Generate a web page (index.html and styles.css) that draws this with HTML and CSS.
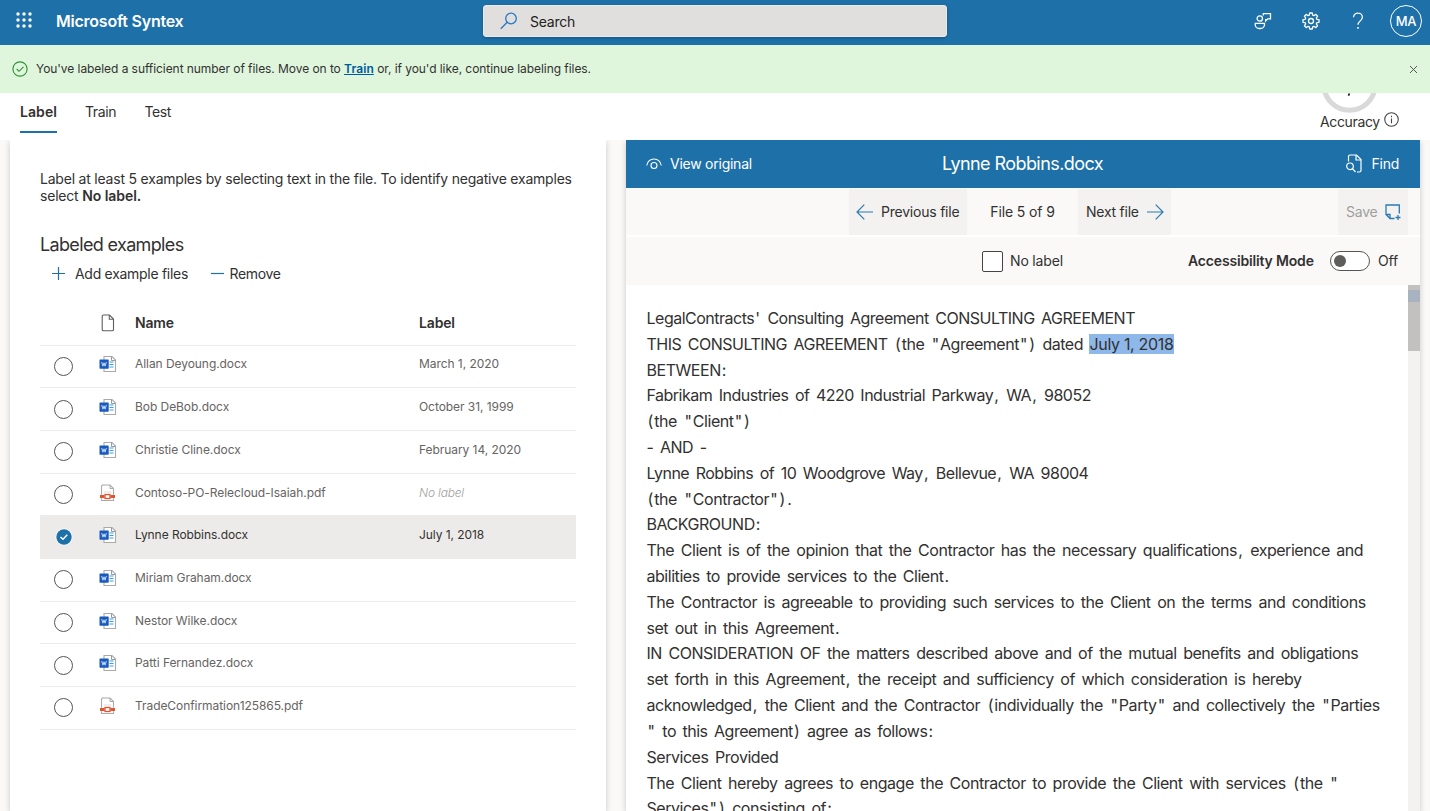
FILE: index.html
```
<!DOCTYPE html>
<html lang="en">
<head>
<meta charset="utf-8">
<title>Microsoft Syntex</title>
<link rel="stylesheet" href="styles.css">
</head>
<body>
<svg class="defs" aria-hidden="true">
  <symbol id="word" viewBox="0 0 18 18">
    <path d="M5 1.500h8l3.500 3.500v11.500h-11.500z" fill="#fff" stroke="#aaa" stroke-width="1.100"/>
    <path d="M12.500 1.500v4h4" fill="none" stroke="#999" stroke-width="1"/>
    <path d="M10.500 7h4M10.500 9.500h4M10.500 12h4" stroke="#3a9be8" stroke-width="1.200"/>
    <rect x="0.500" y="4.500" width="9.200" height="9.200" rx=".6" fill="#185abd"/>
    <path d="M2.700 7l1.200 4.200L5 7.800l1.100 3.400L7.300 7" fill="none" stroke="#c8dcf6" stroke-width="1"/>
  </symbol>
  <symbol id="pdf" viewBox="0 0 18 18">
    <path d="M3.500 1h7.500l3.500 3.500V16.500h-12V2z" fill="#fff" stroke="#aaa" stroke-width="1.100"/>
    <path d="M11 1v3.500h3.500" fill="none" stroke="#aaa"/>
    <path d="M4.500 8h8" stroke="#ddd"/>
    <path d="M1.500 12.500h14" stroke="#fff" stroke-width="3.500"/>
    <path d="M1 12.500h4.500M11.500 12.500h4.500" stroke="#e2532f" stroke-width="3"/>
    <rect x="6" y="10.500" width="5" height="4" fill="#fff" stroke="#e2532f" stroke-width="1.300"/>
  </symbol>
</svg>
<header class="top">
  <svg class="waffle" viewBox="0 0 16 16" fill="#fff"><circle cx="2" cy="2" r="1.700"/><circle cx="8" cy="2" r="1.700"/><circle cx="14" cy="2" r="1.700"/><circle cx="2" cy="8" r="1.700"/><circle cx="8" cy="8" r="1.700"/><circle cx="14" cy="8" r="1.700"/><circle cx="2" cy="14" r="1.700"/><circle cx="8" cy="14" r="1.700"/><circle cx="14" cy="14" r="1.700"/></svg>
  <span class="brand">Microsoft Syntex</span>
  <div class="search">
    <svg width="18" height="18" viewBox="0 0 18 18" fill="none" stroke="#2878c8" stroke-width="1.300"><circle cx="11" cy="6.500" r="5.300"/><path d="M7.200 10.300L.8 16.700"/></svg>
    <span>Search</span>
  </div>
  <div class="actions">
    <svg width="18" height="18" viewBox="0 0 18 18" fill="none" stroke="#fff" stroke-width="1.300"><circle cx="5.800" cy="6.500" r="2.700"/><path d="M1.300 11.300h9.200v1.200a4 4 0 0 1-4 4H5.200a4 4 0 0 1-4-4z"/><path d="M9.300 3.500V1.700h7.200v5.200h-2.800l-2 2V6.900"/></svg>
    <svg width="18" height="18" viewBox="0 0 18 18" fill="none" stroke="#fff" stroke-width="1.300" stroke-linejoin="round"><path d="M7.700 1h2.600l.4 2.200 1.200.5 1.900-1.300 1.800 1.800-1.300 1.900.5 1.200 2.200.4v2.600l-2.200.4-.5 1.200 1.300 1.900-1.800 1.800-1.900-1.300-1.200.5-.4 2.200H7.700l-.4-2.200-1.200-.5-1.900 1.300-1.800-1.800 1.300-1.900-.5-1.200L1 10.300V7.700l2.200-.4.5-1.200-1.300-1.900 1.800-1.800 1.900 1.300 1.200-.5z"/><circle cx="9" cy="9" r="2.500"/></svg>
    <svg width="12" height="18" viewBox="0 0 12 18" fill="none" stroke="#fff" stroke-width="1.300"><path d="M1.500 5.300A4.400 4.400 0 0 1 6 1.200c2.500 0 4.400 1.700 4.400 4 0 3.600-4.400 3.800-4.400 7.600"/><path d="M6 15v1.800" stroke-width="1.600"/></svg>
    <span class="avatar">MA</span>
  </div>
</header>
<div class="banner">
  <svg width="16" height="16" viewBox="0 0 16 16" fill="none" stroke="#2f9136" stroke-width="1.100"><circle cx="8" cy="8" r="7.100"/><path d="M4.700 8l2.300 2.300 4.500-4.500"/></svg>
  <p>You've labeled a sufficient number of files. Move on to <a>Train</a> or, if you'd like, continue labeling files.</p>
  <svg class="close" width="9" height="9" viewBox="0 0 9 9" stroke="#555" stroke-width="1"><path d="M1 1l7 7M8 1L1 8"/></svg>
</div>
<nav class="tabs">
  <span class="tab active">Label</span><span class="tab train">Train</span><span class="tab test">Test</span>
  <div class="accuracy">
    <svg class="ring" width="57" height="20" viewBox="0 37 57 20" fill="none"><circle cx="28.500" cy="28.500" r="25.700" stroke="#d9d9d9" stroke-width="5"/><path d="M27.200 37.500h2l-.7 2.200h-1.700z" fill="#222"/></svg>
    <div class="acc-label"><span>Accuracy</span><svg width="15" height="15" viewBox="0 0 14 14" fill="none" stroke="#444"><circle cx="7" cy="7" r="6.300"/><path d="M7 6v4.500M7 3.600v1.200"/></svg></div>
  </div>
</nav>
<main>
  <section class="left">
    <p class="intro">Label at least 5 examples by selecting text in the file. To identify negative examples<br>select <b>No label.</b></p>
    <h2>Labeled examples</h2>
    <div class="cmds">
      <svg width="13" height="13" viewBox="0 0 13 13" stroke="#1d70a8" stroke-width="1.200"><path d="M6.500 0v13M0 6.500h13"/></svg><span class="add">Add example files</span>
      <svg width="13" height="13" viewBox="0 0 13 13" stroke="#1d70a8" stroke-width="1.200"><path d="M0 6.500h13"/></svg><span class="rem">Remove</span>
    </div>
    <div class="grid">
      <div class="row head"><span></span><svg width="14" height="18" viewBox="0 0 14 18" fill="none" stroke="#605e5c" stroke-width="1.100"><path d="M2.500 1h6l4 4v10.500a1.300 1.300 0 0 1-1.300 1.300H2.500a1.300 1.300 0 0 1-1.300-1.300v-13A1.300 1.300 0 0 1 2.500 1z"/><path d="M8.300 1v4.200h4.200"/></svg><b>Name</b><b>Label</b></div>
      <div class="row"><i class="radio"></i><svg class="ft"><use href="#word"/></svg><span>Allan Deyoung.docx</span><span>March 1, 2020</span></div>
      <div class="row"><i class="radio"></i><svg class="ft"><use href="#word"/></svg><span>Bob DeBob.docx</span><span>October 31, 1999</span></div>
      <div class="row"><i class="radio"></i><svg class="ft"><use href="#word"/></svg><span>Christie Cline.docx</span><span>February 14, 2020</span></div>
      <div class="row"><i class="radio"></i><svg class="ft"><use href="#pdf"/></svg><span>Contoso-PO-Relecloud-Isaiah.pdf</span><span class="none">No label</span></div>
      <div class="row sel"><svg class="check" viewBox="0 0 18 18"><circle cx="9" cy="9" r="8.500" fill="#fff"/><circle cx="9" cy="9" r="7.700" fill="#1d70a8"/><path d="M5.500 9l2.500 2.300 4.300-4.500" fill="none" stroke="#fff" stroke-width="1.500"/></svg><svg class="ft"><use href="#word"/></svg><span>Lynne Robbins.docx</span><span>July 1, 2018</span></div>
      <div class="row"><i class="radio"></i><svg class="ft"><use href="#word"/></svg><span>Miriam Graham.docx</span><span></span></div>
      <div class="row"><i class="radio"></i><svg class="ft"><use href="#word"/></svg><span>Nestor Wilke.docx</span><span></span></div>
      <div class="row"><i class="radio"></i><svg class="ft"><use href="#word"/></svg><span>Patti Fernandez.docx</span><span></span></div>
      <div class="row"><i class="radio"></i><svg class="ft"><use href="#pdf"/></svg><span>TradeConfirmation125865.pdf</span><span></span></div>
    </div>
  </section>
  <section class="right">
    <div class="titlebar">
      <div class="tb-left"><svg width="16" height="12" viewBox="0 0 16 12" fill="none" stroke="#fff" stroke-width="1.100"><path d="M.7 7.500C1.600 3.300 4.300 1 8 1s6.400 2.300 7.300 6.500"/><circle cx="8" cy="7.500" r="3"/></svg><span>View original</span></div>
      <h1>Lynne Robbins.docx</h1>
      <div class="tb-right"><svg width="18" height="20" viewBox="0 0 18 20" fill="none" stroke="#fff" stroke-width="1.200"><path d="M3.500 7.500v-5A1.500 1.500 0 0 1 5 1h6.500l4.500 4.500v11a1.500 1.500 0 0 1-1.500 1.500H12"/><path d="M11 1v5h5"/><circle cx="5" cy="12.300" r="3.300"/><path d="M7.400 14.700L10.500 18"/></svg><span>Find</span></div>
    </div>
    <div class="bar files">
      <span class="btn prev"><svg width="17" height="16" viewBox="0 0 17 16" fill="none" stroke="#2a7ab2" stroke-width="1.200"><path d="M8.300.7L1 8l7.300 7.300M1 8h16"/></svg><em>Previous file</em></span>
      <span class="count">File 5 of 9</span>
      <span class="btn next"><em>Next file</em><svg width="17" height="16" viewBox="0 0 17 16" fill="none" stroke="#2a7ab2" stroke-width="1.200"><path d="M8.700.7L16 8l-7.300 7.300M16 8H0"/></svg></span>
      <span class="btn save"><em>Save</em><svg width="16" height="16" viewBox="0 0 16 16" fill="none" stroke="#2a7ab2" stroke-width="1.300"><path d="M14.300 9.500V1H1v9.500l4 4h4.500M1 10.500h4v4M13 11v5M10.500 13.500h5"/></svg></span>
    </div>
    <div class="bar modes">
      <i class="box"></i><span class="nolabel">No label</span>
      <b>Accessibility Mode</b><i class="toggle"></i><span class="off">Off</span>
    </div>
    <div class="doc">
      <div class="text">
        <p class="tight">LegalContracts<u>'</u> Consulting Agreement CONSULTING AGREEMENT</p>
        <p class="tight">THIS CONSULTING AGREEMENT <u>(</u>the <u>"</u>Agreement<u>"</u><u>)</u> dated <mark>July 1, 2018</mark></p>
        <p>BETWEEN<u>:</u></p>
        <p class="tight">Fabrikam Industries of 4220 Industrial Parkway<u>,</u> WA<u>,</u> 98052</p>
        <p><u>(</u>the <u>"</u>Client<u>"</u><u>)</u></p>
        <p>- AND -</p>
        <p class="tight">Lynne Robbins of 10 Woodgrove Way<u>,</u> Bellevue<u>,</u> WA 98004</p>
        <p><u>(</u>the <u>"</u>Contractor<u>"</u><u>)</u><u>.</u></p>
        <p>BACKGROUND<u>:</u></p>
        <p>The Client is of the opinion that the Contractor has the necessary qualifications<u>,</u> experience and</p>
        <p>abilities to provide services to the Client<u>.</u></p>
        <p>The Contractor is agreeable to providing such services to the Client on the terms and conditions</p>
        <p>set out in this Agreement<u>.</u></p>
        <p>IN CONSIDERATION OF the matters described above and of the mutual benefits and obligations</p>
        <p>set forth in this Agreement<u>,</u> the receipt and sufficiency of which consideration is hereby</p>
        <p>acknowledged<u>,</u> the Client and the Contractor <u>(</u>individually the <u>"</u>Party<u>"</u> and collectively the <u>"</u>Parties</p>
        <p class="tight"><u>"</u> to this Agreement<u>)</u> agree as follows<u>:</u></p>
        <p>Services Provided</p>
        <p>The Client hereby agrees to engage the Contractor to provide the Client with services <u>(</u>the <u>"</u></p>
        <p>Services<u>"</u><u>)</u> consisting of<u>:</u></p>
      </div>
      <div class="scroll"><div class="thumb"><div class="mark"></div></div></div>
    </div>
  </section>
</main>
</body>
</html>
```
FILE: styles.css
```
*{box-sizing:border-box}
body{margin:0;height:811px;overflow:hidden;display:flex;flex-direction:column;font:14px/18px Inter,"Liberation Sans",sans-serif;letter-spacing:-.25px;color:#323130;background:#fff}
svg{display:block;flex:none}
.defs{position:absolute;width:0;height:0}
p,h1,h2{margin:0;font-weight:400}
em{font-style:normal;white-space:nowrap}
b{font-weight:600}
.top{height:45px;flex:none;display:flex;align-items:center;background:#1d70a8;color:#fff;padding:0 8px 3px 16px}
.waffle{width:16px;height:16px;margin-top:-2px}
.brand{font-size:16px;font-weight:600;letter-spacing:-.23px;margin-left:24px;width:427px}
.search{width:464px;height:32px;border-radius:3px;background:#e1dfdd;border:1px solid #eceae8;box-shadow:0 1px 3px #0004;display:flex;align-items:center;padding-left:16px;gap:12px;color:#222}
.search svg{margin-top:-1px}
.search span{padding-top:1px}
.actions{margin-left:auto;display:flex;align-items:center}
.actions svg:nth-child(1){margin-right:30px}
.actions svg:nth-child(2){margin-right:32px}
.actions svg:nth-child(3){margin-right:26px}
.avatar{width:32px;height:32px;border:1px solid #fff;border-radius:50%;text-align:center;line-height:31px;font-size:13px;font-weight:500;letter-spacing:-.4px}
.banner{height:48px;flex:none;background:#dff6dd;display:flex;align-items:center;padding:0 12px;font-size:12px;letter-spacing:-.065px}
.banner p{margin-left:8px}
.banner a{font-weight:600;color:#005a9e;text-decoration:underline;letter-spacing:.1px}
.close{margin-left:auto}
.tabs{height:47px;flex:none;display:flex;padding-left:20px}
.tab{padding-top:10px;height:40px;letter-spacing:-.4px}
.active{font-weight:600;letter-spacing:.08px;width:37px;border-bottom:2px solid #1d70a8}
.train{margin-left:28px;width:31px}
.test{margin-left:28.500px}
.accuracy{margin-left:auto;width:110px}
.ring{margin-left:1px;margin-top:-.5px}
.acc-label{display:flex;align-items:center;gap:4px;letter-spacing:-.35px}
.acc-label svg{margin-top:-4px}
main{flex:1;min-height:0;display:flex;background:#faf9f8;padding:0 10px;justify-content:space-between}
.left{width:596px;background:#fff;box-shadow:0 2px 6px #0003;padding:30px 30px 0;clip-path:inset(0 -9px)}
.intro{line-height:17px;letter-spacing:-.21px}
.intro b{letter-spacing:-.06px}
h2{font-size:18px;line-height:24px;letter-spacing:-.65px;margin-top:28.500px}
.cmds{display:flex;align-items:center;padding:7px 0 0 12px;height:27.500px}
.add{margin:0 22.500px 0 10px;width:113px;white-space:nowrap;letter-spacing:-.29px}
.rem{margin-left:6px;letter-spacing:-.35px}
.grid{margin-top:17px}
.row{display:grid;grid-template-columns:59px 36px 284px 1fr;align-items:center;height:42.700px;border-bottom:1px solid #edebe9;font-size:12px;letter-spacing:-.06px;color:#666462}
.head{height:44.600px;font-size:14px;letter-spacing:-.15px;color:#323130}
.head svg{margin-left:2px}
.row:not(.head)>span{padding-bottom:4px}
.radio{width:19px;height:19px;border:1px solid #555;border-radius:50%;margin-left:14px;justify-self:start}
.check{width:18px;height:18px;margin-left:15px}
.ft{width:18px;height:18px;margin-top:-4px}
.none{font-style:italic;font-weight:300;color:#a19f9d;letter-spacing:-.19px}
.sel{background:#edebe9;color:#323130}
.right{width:794px;background:#fff;box-shadow:0 2px 6px #0003;clip-path:inset(0 -9px);display:flex;flex-direction:column}
.titlebar{height:48px;flex:none;background:#1d70a8;color:#fff;display:grid;grid-template-columns:1fr auto 1fr;align-items:center;padding:0 21px 0 20px}
.tb-left,.tb-right{display:flex;align-items:center;gap:8px}
.tb-right{justify-content:flex-end;gap:9px}
h1{font-size:18px;letter-spacing:-.57px}
.bar{height:48px;flex:none;background:#faf9f8;display:flex}
.files{height:47px;margin-bottom:2px;padding:1px 12px 0 223px;align-items:stretch}
.btn{background:#f3f2f1;display:flex;align-items:center;padding:0 7px}
.prev{width:118px;gap:8px;letter-spacing:-.22px}
.count{width:111px;text-align:center;line-height:46px;letter-spacing:-.12px}
.next{width:93px;padding-left:8px;justify-content:space-between}
.save{margin-left:auto;width:70px;padding-left:8px;justify-content:space-between;color:#a19f9d}
.modes{align-items:center;padding-left:356px;letter-spacing:-.17px}
.box{width:21px;height:21px;border:1px solid #444;border-radius:2px;background:#fff}
.nolabel{margin-left:7px;width:54px}
.modes b{margin-left:124px;width:126px;white-space:nowrap}
.toggle{width:40px;height:20px;border:1px solid #555;border-radius:10px;background:#fff;margin-left:16px;padding:3px}
.toggle::before{content:"";display:block;width:12px;height:12px;border-radius:50%;background:#605e5c}
.off{margin-left:8px;padding-bottom:1px}
.doc{flex:1;min-height:0;display:flex;justify-content:space-between;overflow:hidden}
.text{padding:20.900px 0 0 20.500px;font-size:16px;line-height:25.820px;letter-spacing:-.46px;word-spacing:2.500px;white-space:nowrap}
.tight{letter-spacing:-.5px}
.text u{text-decoration:none;margin:0 1.300px 0 1.100px}
mark{background:#8eb7ea;color:inherit;word-spacing:0;letter-spacing:-.32px}
.scroll{width:12px;background:#f3f2f1}
.thumb{height:66px;background:#c2c1c0;padding-top:5px}
.mark{height:12px;background:#a8b3c2}
```
